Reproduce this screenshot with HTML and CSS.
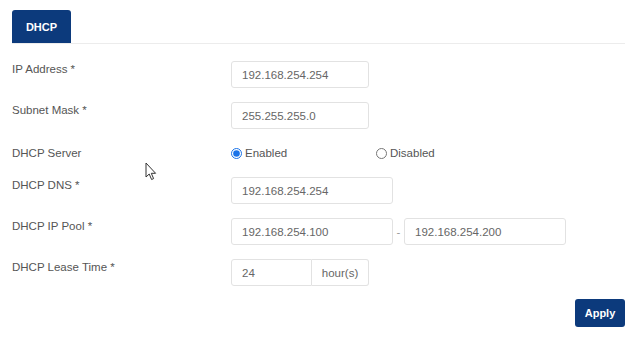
FILE: index.html
```html
<!DOCTYPE html>
<html lang="en">
<head>
    <meta charset="UTF-8">
    <meta name="viewport" content="width=device-width, initial-scale=1.0">
    <title>DHCP</title>
    <link rel="stylesheet" href="styles.css">
</head>
<body>
    <div class="pagina">
        <div class="tabs">
            <div class="tab activa">DHCP</div>
        </div>

        <form class="formulario">
            <div class="fila">
                <label class="etiqueta">IP Address *</label>
                <input class="campo corto" type="text" value="192.168.254.254">
            </div>
            <div class="fila">
                <label class="etiqueta">Subnet Mask *</label>
                <input class="campo corto" type="text" value="255.255.255.0">
            </div>
            <div class="fila radios">
                <label class="etiqueta">DHCP Server</label>
                <div class="opciones">
                    <label class="opcion"><input type="radio" name="server" checked> Enabled</label>
                    <label class="opcion"><input type="radio" name="server"> Disabled</label>
                </div>
            </div>
            <div class="fila">
                <label class="etiqueta">DHCP DNS *</label>
                <input class="campo largo" type="text" value="192.168.254.254">
            </div>
            <div class="fila">
                <label class="etiqueta">DHCP IP Pool *</label>
                <div class="rango">
                    <input class="campo largo" type="text" value="192.168.254.100">
                    <span class="guion">-</span>
                    <input class="campo largo" type="text" value="192.168.254.200">
                </div>
            </div>
            <div class="fila">
                <label class="etiqueta">DHCP Lease Time *</label>
                <div class="grupo">
                    <input class="campo horas" type="text" value="24">
                    <span class="sufijo">hour(s)</span>
                </div>
            </div>
            <div class="acciones">
                <button type="button" class="boton">Apply</button>
            </div>
        </form>

        <svg class="cursor" width="12" height="19" viewBox="0 0 12 19">
            <path d="M1 1 L1 15 L4.2 12 L6.6 17.5 L8.6 16.6 L6.3 11.3 L10.6 11.3 Z" fill="#fff" stroke="#333" stroke-width="1" stroke-linejoin="round"/>
        </svg>
    </div>
</body>
</html>
```

FILE: styles.css
```css
body {
    font-family: "Liberation Sans", Arial, sans-serif;
    font-size: 11.5px;
    color: #555;
    background-color: #fff;
    margin: 0;
}

.pagina {
    position: relative;
    padding: 10px 15px 0 12px;
}

.tabs {
    display: flex;
    border-bottom: 1px solid #ececec;
}

.tab {
    width: 59px;
    height: 33px;
    display: flex;
    align-items: center;
    justify-content: center;
    font-size: 11px;
    font-weight: bold;
    color: #fff;
    background-color: #0c3a7c;
    border-radius: 3px 3px 0 0;
}

.formulario {
    margin-top: 17px;
    display: flex;
    flex-direction: column;
    gap: 14px;
}

.fila {
    display: grid;
    grid-template-columns: 219px auto;
    align-items: start;
}

.etiqueta {
    line-height: 17px;
    color: #555;
}

.campo {
    box-sizing: border-box;
    height: 27px;
    margin: 0;
    padding: 0 10px;
    font-family: inherit;
    font-size: 11.5px;
    color: #666;
    border: 1px solid #e2e2e2;
    border-radius: 3px;
    outline: none;
}

.corto {
    width: 138px;
}

.largo {
    width: 162px;
}

.radios {
    height: 20px;
    align-items: center;
}

.opciones {
    display: flex;
    align-items: center;
}

.opcion {
    width: 145px;
    display: flex;
    align-items: center;
    gap: 3px;
    color: #555;
}

.opcion input {
    width: 11px;
    height: 11px;
    margin: 0;
    accent-color: #1a73e8;
}

.rango {
    display: flex;
    align-items: center;
}

.guion {
    width: 11px;
    text-align: center;
    color: #999;
}

.grupo {
    display: flex;
}

.horas {
    width: 81px;
    border-radius: 3px 0 0 3px;
}

.sufijo {
    box-sizing: border-box;
    height: 27px;
    width: 57px;
    display: flex;
    align-items: center;
    justify-content: center;
    color: #666;
    border: 1px solid #e2e2e2;
    border-left: none;
    border-radius: 0 3px 3px 0;
}

.acciones {
    display: flex;
    justify-content: flex-end;
    margin-top: -1px;
}

.boton {
    width: 50px;
    height: 28px;
    font-family: inherit;
    font-size: 11px;
    font-weight: bold;
    color: #fff;
    background-color: #0c3a7c;
    border: none;
    border-radius: 3px;
    cursor: pointer;
}

.cursor {
    position: absolute;
    left: 145px;
    top: 162px;
}
```
